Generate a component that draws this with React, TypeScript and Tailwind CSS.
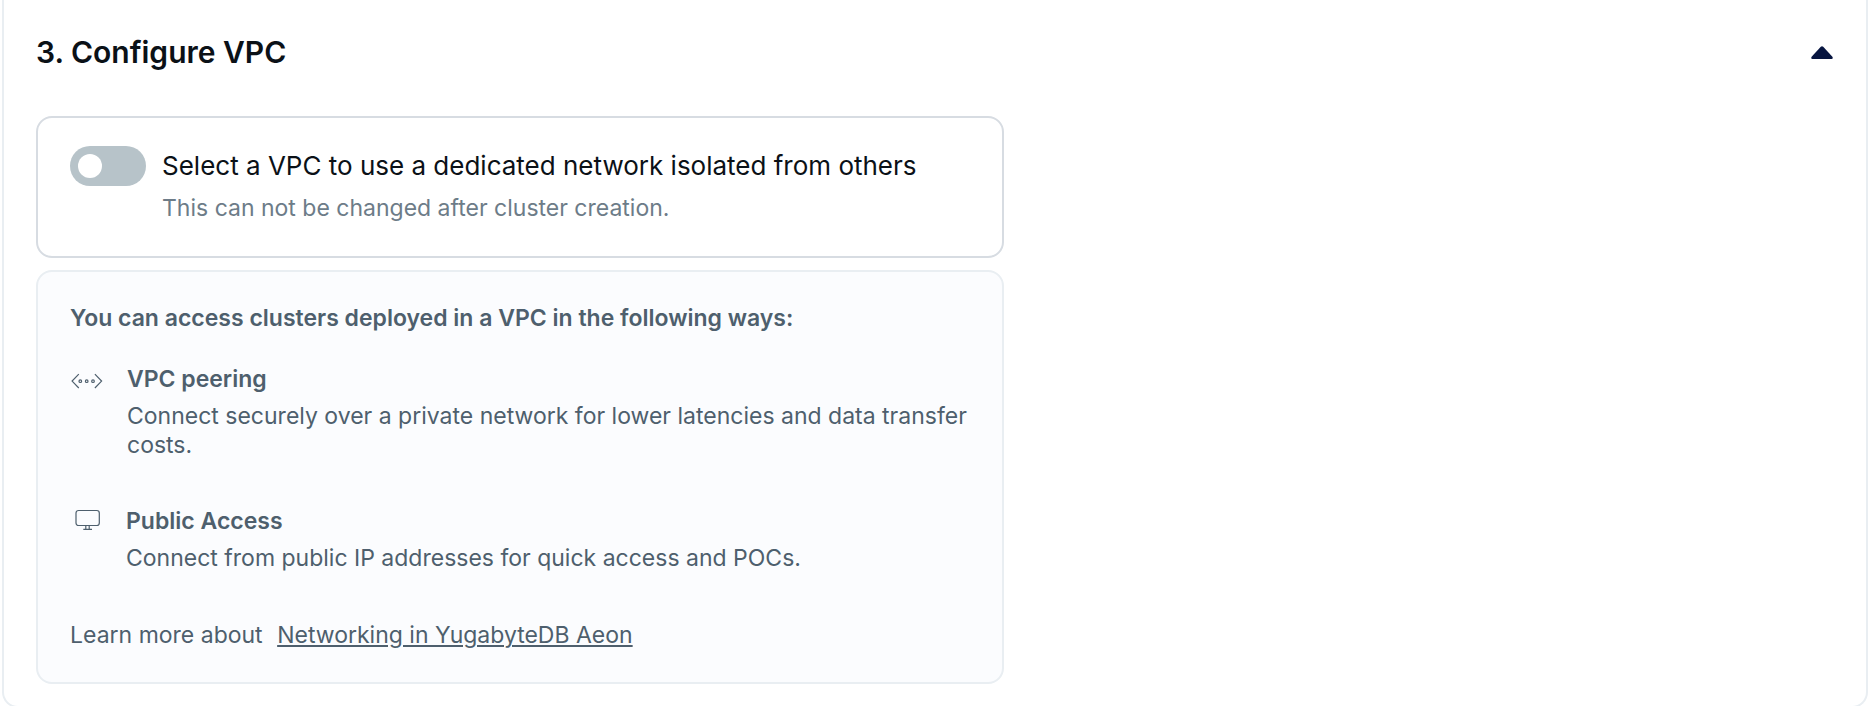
import type { ReactNode } from "react";

function PeeringIcon() {
  return (
    <svg className="mt-1 mr-[21px] shrink-0" width="36" height="24" viewBox="0 0 36 24" fill="none" stroke="#4e5f6d" strokeWidth="1.2">
      <path d="M8.8 5.2 L2.1 12.1 L8.8 19" />
      <path d="M24.9 5.2 L31.6 12.1 L24.9 19" />
      <circle cx="10.3" cy="12.2" r="1.3" />
      <circle cx="16.7" cy="12.2" r="1.3" />
      <circle cx="23" cy="12.2" r="1.3" />
    </svg>
  );
}

function MonitorIcon() {
  return (
    <svg className="mt-px mr-5 shrink-0" width="36" height="24" viewBox="0 0 36 24" fill="none" stroke="#4e5f6d" strokeWidth="1.2">
      <rect x="6" y="2.5" width="23.3" height="15" rx="2.5" />
      <path d="M15.8 17.5 V21.4 M19.2 17.5 V21.4 M13.3 21.4 H22" />
    </svg>
  );
}

function AccessOption({ icon, title, children }: { icon: ReactNode; title: string; children: ReactNode }) {
  return (
    <div className="flex items-start">
      {icon}
      <div className="flex flex-1 flex-col gap-2">
        <h3 className="font-semibold">{title}</h3>
        <p>{children}</p>
      </div>
    </div>
  );
}

export default function App() {
  return (
    <div className="h-[706px] overflow-hidden bg-white px-0.5 font-['Inter',sans-serif]">
      <section className="h-[708px] rounded-b-[16px] border-2 border-t-0 border-[#e9eef2] px-8">
        <header className="flex h-[116px] items-start justify-between pt-[34px]">
          <h2 className="text-[30px] leading-[36px] font-semibold text-[#0b1117]">3. Configure VPC</h2>
          <svg className="mt-3 mr-px" width="22" height="13" viewBox="0 0 22 13">
            <path d="M9.8 0.8 Q11 -0.3 12.2 0.8 L21.4 10.8 Q22.4 13 20.6 13 H1.4 Q-0.4 13 0.6 10.8 Z" fill="#071540" />
          </svg>
        </header>

        <div className="flex h-[142px] w-[968px] gap-4 rounded-[16px] border-2 border-[#d7dce2] px-8 pt-7">
          <button
            type="button"
            role="switch"
            aria-checked="false"
            aria-label="Use a VPC"
            className="flex h-10 w-[76px] items-center rounded-full bg-[#b7c3c9] px-2"
          >
            <span className="size-6 rounded-full bg-white" />
          </button>
          <div className="flex flex-col gap-3 pt-1">
            <p className="text-[26px] leading-[32px] text-[#0b1117]">
              Select a VPC to use a dedicated network isolated from others
            </p>
            <p className="text-[23px] leading-[29px] text-[#6d7c88]">This can not be changed after cluster creation.</p>
          </div>
        </div>

        <div className="mt-3 h-[414px] w-[968px] rounded-[16px] border-2 border-[#e9eef2] bg-[#fbfcfe] px-8 pt-8 text-[23px] leading-[29px] text-[#4e5f6d]">
          <h3 className="font-semibold">You can access clusters deployed in a VPC in the following ways:</h3>
          <div className="mt-8">
            <AccessOption icon={<PeeringIcon />} title="VPC peering">
              Connect securely over a private network for lower latencies and data transfer costs.
            </AccessOption>
          </div>
          <div className="mt-[47px]">
            <AccessOption icon={<MonitorIcon />} title="Public Access">
              Connect from public IP addresses for quick access and POCs.
            </AccessOption>
          </div>
          <p className="mt-12 flex gap-[14.5px]">
            <span>Learn more about</span>
            <a href="#" className="underline decoration-2 underline-offset-2">
              Networking in YugabyteDB Aeon
            </a>
          </p>
        </div>
      </section>
    </div>
  );
}
